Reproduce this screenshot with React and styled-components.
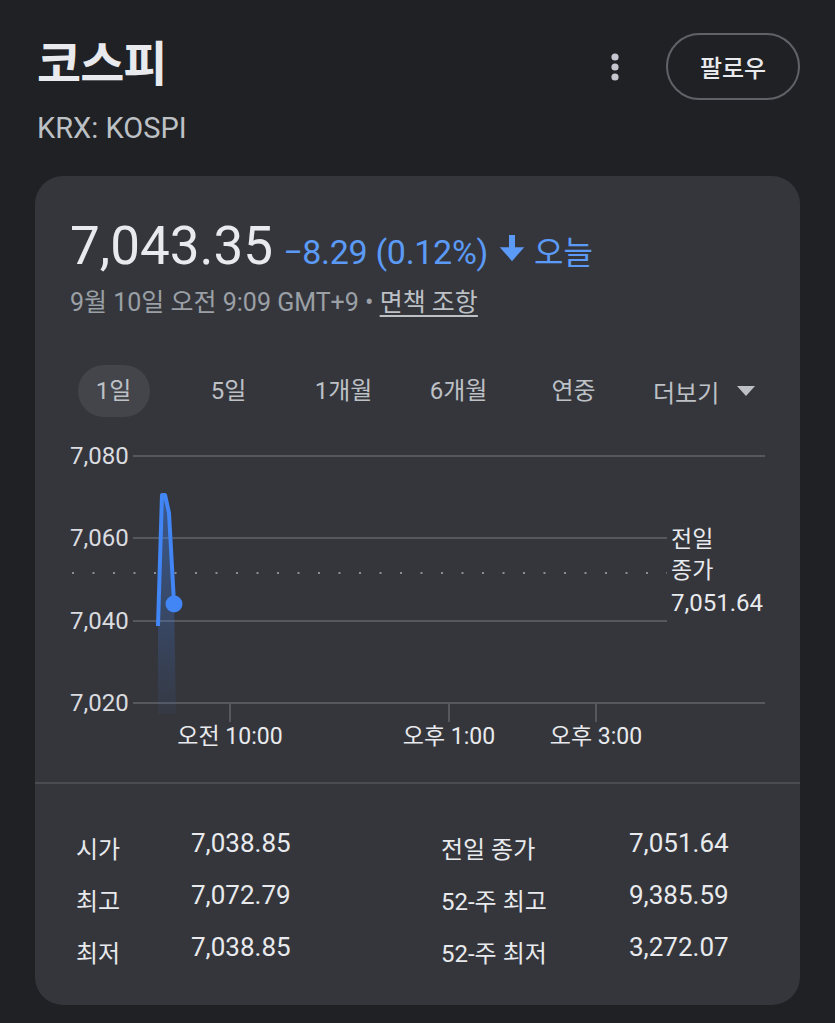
import React from 'react'
import styled, { createGlobalStyle } from 'styled-components'

const GlobalStyle = createGlobalStyle`
  html, body {
    margin: 0;
    padding: 0;
    background: #202124;
  }
  body {
    font-family: Roboto, "Noto Sans CJK KR", sans-serif;
    color: #e8eaed;
  }
`

const tabs = ['1일', '5일', '1개월', '6개월', '연중']

const stats = [
  ['시가', '7,038.85', '전일 종가', '7,051.64'],
  ['최고', '7,072.79', '52-주 최고', '9,385.59'],
  ['최저', '7,038.85', '52-주 최저', '3,272.07'],
]

export default function App() {
  return (
    <Page>
      <GlobalStyle />
      <Header>
        <Title>코스피</Title>
        <Actions>
          <Kebab width="10" height="30" viewBox="0 0 10 30">
            <circle cx="5" cy="5" r="3.6" />
            <circle cx="5" cy="15" r="3.6" />
            <circle cx="5" cy="25" r="3.6" />
          </Kebab>
          <FollowButton>팔로우</FollowButton>
        </Actions>
      </Header>
      <Ticker>KRX: KOSPI</Ticker>

      <Card>
        <PriceRow>
          <Price>7,043.35</Price>
          <Change>−8.29 (0.12%)</Change>
          <DownArrow viewBox="0 0 24 24" width="30" height="30">
            <path d="M9.6 1.5h4.8v9.8h7.4L12 22.5 2.2 11.3h7.4z" />
          </DownArrow>
          <Today>오늘</Today>
        </PriceRow>
        <DateLine>
          9월 10일 오전 9:09 GMT+9 • <Disclaimer>면책 조항</Disclaimer>
        </DateLine>

        <Tabs>
          {tabs.map((t, i) => (
            <Tab key={t} active={i === 0}>{t}</Tab>
          ))}
          <MoreTab>
            더보기
            <Caret width="18" height="10" viewBox="0 0 18 10">
              <path d="M0 0h18L9 10z" />
            </Caret>
          </MoreTab>
        </Tabs>

        <Chart width="765" height="330" viewBox="0 0 765 330">
          <defs>
            <linearGradient id="fillGrad" x1="0" y1="0" x2="0" y2="1">
              <stop offset="0" stopColor="#4285f4" stopOpacity="0.45" />
              <stop offset="1" stopColor="#4285f4" stopOpacity="0.04" />
            </linearGradient>
          </defs>
          <g stroke="#55585e" strokeWidth="2">
            <line x1="98" y1="17" x2="730" y2="17" />
            <line x1="98" y1="99" x2="632" y2="99" />
            <line x1="98" y1="182" x2="632" y2="182" />
            <line x1="98" y1="264" x2="730" y2="264" />
            <line x1="195" y1="264" x2="195" y2="283" />
            <line x1="414" y1="264" x2="414" y2="283" />
            <line x1="561" y1="264" x2="561" y2="283" />
          </g>
          <line x1="37" y1="134" x2="632" y2="134" stroke="#8a8d93" strokeWidth="2" strokeDasharray="2 18.5" />
          <g fill="#dadce0" fontSize="24" fontFamily='Roboto, "Noto Sans CJK KR", sans-serif'>
            <text x="35" y="25">7,080</text>
            <text x="35" y="107">7,060</text>
            <text x="35" y="190">7,040</text>
            <text x="35" y="272">7,020</text>
          </g>
          <g fill="#e8eaed" fontSize="23" textAnchor="middle" fontFamily='Roboto, "Noto Sans CJK KR", sans-serif'>
            <text x="195" y="305">오전 10:00</text>
            <text x="414" y="305">오후 1:00</text>
            <text x="561" y="305">오후 3:00</text>
          </g>
          <g fill="#e8eaed" fontSize="23" fontFamily='Roboto, "Noto Sans CJK KR", sans-serif'>
            <text x="636" y="108">전일</text>
            <text x="636" y="139">종가</text>
            <text fontSize="24" x="636" y="172">7,051.64</text>
          </g>
          <polygon points="123,187 127,56 130,56 134,74 139,164 141,275 123,275" fill="url(#fillGrad)" />
          <polyline points="123,187 127,56 130,56 134,74 139,164" fill="none" stroke="#4285f4" strokeWidth="4" strokeLinejoin="round" />
          <circle cx="139" cy="165" r="8.5" fill="#4285f4" />
        </Chart>

        <Divider />

        <Stats>
          {stats.map(row => (
            <React.Fragment key={row[0]}>
              <StatLabel>{row[0]}</StatLabel>
              <StatValue>{row[1]}</StatValue>
              <StatLabel>{row[2]}</StatLabel>
              <StatValue>{row[3]}</StatValue>
            </React.Fragment>
          ))}
        </Stats>
      </Card>
    </Page>
  )
}

const Page = styled.div`
  width: 835px;
  min-height: 1023px;
  padding-top: 33px;
  box-sizing: border-box;
  background: #202124;
`

const Header = styled.div`
  display: flex;
  align-items: center;
  justify-content: space-between;
  padding: 0 35px 0 37px;
  height: 67px;
`

const Title = styled.h1`
  margin: 0;
  font-size: 48px;
  font-weight: 700;
  line-height: 60px;
  color: #e8eaed;
  letter-spacing: -1px;
  position: relative;
  top: -2px;
`

const Actions = styled.div`
  display: flex;
  align-items: center;
  gap: 46px;
`

const Kebab = styled.svg`
  fill: #c4c7cf;
  display: block;
`

const FollowButton = styled.button`
  width: 134px;
  height: 67px;
  border: 2px solid #5f6368;
  border-radius: 34px;
  background: transparent;
  color: #e8eaed;
  font-family: Roboto, "Noto Sans CJK KR", sans-serif;
  font-size: 24px;
  font-weight: 500;
  cursor: pointer;
`

const Ticker = styled.div`
  padding-left: 37px;
  margin-top: 11px;
  font-size: 29px;
  line-height: 34px;
  color: #bdc1c6;
`

const Card = styled.section`
  margin: 31px 0 0 35px;
  width: 765px;
  background: #35363c;
  border-radius: 28px;
  padding: 38px 0 32px;
  box-sizing: border-box;
`

const PriceRow = styled.div`
  display: flex;
  align-items: baseline;
  padding-left: 35px;
  height: 64px;
  line-height: 64px;
`

const Price = styled.span`
  font-size: 53px;
  color: #e8eaed;
  margin-right: 10px;
`

const Change = styled.span`
  font-size: 34px;
  letter-spacing: -0.3px;
  color: #5b9bf7;
`

const Today = styled.span`
  font-size: 32px;
  color: #5b9bf7;
`

const DownArrow = styled.svg`
  fill: #5b9bf7;
  margin: 0 7px 0 9px;
  align-self: center;
  position: relative;
  top: 2px;
`

const DateLine = styled.div`
  margin-top: 8px;
  padding-left: 35px;
  font-size: 25px;
  line-height: 34px;
  color: #9aa0a6;
`

const Disclaimer = styled.a`
  color: #bdc1c6;
  text-decoration: underline;
  text-underline-offset: 4px;
`

const Tabs = styled.div`
  display: grid;
  grid-template-columns: repeat(5, 115px) auto;
  align-items: center;
  margin-top: 45px;
  padding-left: 21px;
  height: 52px;
`

const Tab = styled.div`
  justify-self: center;
  min-width: 72px;
  height: 52px;
  line-height: 52px;
  text-align: center;
  border-radius: 26px;
  font-size: 24px;
  white-space: nowrap;
  color: #bdc1c6;
  background: ${props => (props.active ? '#43454b' : 'transparent')};
`

const MoreTab = styled.div`
  display: flex;
  align-items: center;
  gap: 18px;
  padding-left: 22px;
  font-size: 24px;
  color: #bdc1c6;
  white-space: nowrap;
`

const Caret = styled.svg`
  fill: #bdc1c6;
`

const Chart = styled.svg`
  display: block;
  margin-top: 22px;
`

const Divider = styled.div`
  margin-top: 13px;
  height: 2px;
  background: #4a4c52;
`

const Stats = styled.div`
  display: grid;
  grid-template-columns: 115px 250px 188px auto;
  grid-auto-rows: 52px;
  align-items: center;
  padding: 33px 0 0 41px;
`

const StatLabel = styled.div`
  font-size: 24px;
  color: #e8eaed;
  position: relative;
  top: 4px;
`

const StatValue = styled.div`
  font-size: 26px;
  color: #e8eaed;
`
